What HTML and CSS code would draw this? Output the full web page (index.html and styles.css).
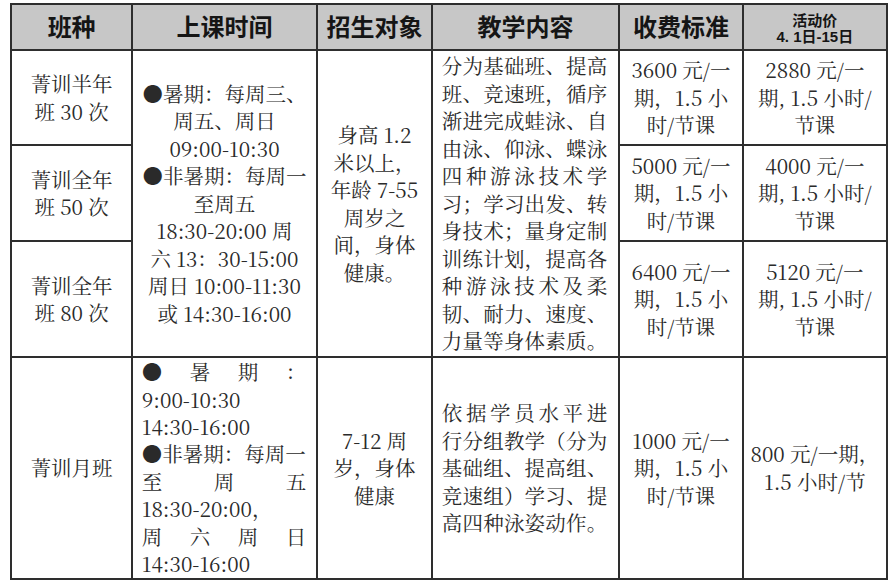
FILE: index.html
```html
<!DOCTYPE html>
<html lang="zh-CN">
<head>
<meta charset="utf-8">
<title>班种收费表</title>
<link rel="stylesheet" href="styles.css">
</head>
<body>
<div class="sheet">
  <div class="cell head">班种</div>
  <div class="cell head">上课时间</div>
  <div class="cell head">招生对象</div>
  <div class="cell head">教学内容</div>
  <div class="cell head">收费标准</div>
  <div class="cell head small"><span>活动价</span><span>4.&nbsp;1日-15日</span></div>

  <div class="cell center">菁训半年<br>班 30 次</div>
  <div class="cell center span3">
    <div class="ln">●暑期：每周三、</div>
    <div class="ln">周五、周日</div>
    <div class="ln">09:00-10:30</div>
    <div class="ln">●非暑期：每周一</div>
    <div class="ln">至周五</div>
    <div class="ln">18:30-20:00 周</div>
    <div class="ln">六 13：30-15:00</div>
    <div class="ln">周日 10:00-11:30</div>
    <div class="ln">或 14:30-16:00</div>
  </div>
  <div class="cell center span3">
    <div class="ln">身高 1.2</div>
    <div class="ln">米以上，</div>
    <div class="ln">年龄 7-55</div>
    <div class="ln">周岁之</div>
    <div class="ln">间，身体</div>
    <div class="ln">健康。</div>
  </div>
  <div class="cell just span3">
    <div class="ln">分为基础班、提高</div>
    <div class="ln">班、竞速班，循序</div>
    <div class="ln">渐进完成蛙泳、自</div>
    <div class="ln">由泳、仰泳、蝶泳</div>
    <div class="ln">四种游泳技术学</div>
    <div class="ln">习；学习出发、转</div>
    <div class="ln">身技术；量身定制</div>
    <div class="ln">训练计划，提高各</div>
    <div class="ln">种游泳技术及柔</div>
    <div class="ln">韧、耐力、速度、</div>
    <div class="ln">力量等身体素质。</div>
  </div>
  <div class="cell center">3600 元/一<br>期，1.5 小<br>时/节课</div>
  <div class="cell center">2880 元/一<br>期, 1.5 小时/<br>节课</div>

  <div class="cell center">菁训全年<br>班 50 次</div>
  <div class="cell center">5000 元/一<br>期，1.5 小<br>时/节课</div>
  <div class="cell center">4000 元/一<br>期, 1.5 小时/<br>节课</div>

  <div class="cell center">菁训全年<br>班 80 次</div>
  <div class="cell center">6400 元/一<br>期，1.5 小<br>时/节课</div>
  <div class="cell center">5120 元/一<br>期, 1.5 小时/<br>节课</div>

  <div class="cell center">菁训月班</div>
  <div class="cell left">
    <div class="ln spread"><span>●</span><span>暑</span><span>期</span><span>：</span></div>
    <div class="ln">9:00-10:30</div>
    <div class="ln">14:30-16:00</div>
    <div class="ln">●非暑期：每周一</div>
    <div class="ln spread"><span>至</span><span>周</span><span>五</span></div>
    <div class="ln">18:30-20:00，</div>
    <div class="ln spread"><span>周</span><span>六</span><span>周</span><span>日</span></div>
    <div class="ln">14:30-16:00</div>
  </div>
  <div class="cell center">7-12 周<br>岁，身体<br>健康</div>
  <div class="cell just">
    <div class="ln">依据学员水平进</div>
    <div class="ln">行分组教学（分为</div>
    <div class="ln">基础组、提高组、</div>
    <div class="ln">竞速组）学习、提</div>
    <div class="ln">高四种泳姿动作。</div>
  </div>
  <div class="cell center">1000 元/一<br>期，1.5 小<br>时/节课</div>
  <div class="cell center">800 元/一期，<br>1.5 小时/节</div>
</div>
</body>
</html>
```

FILE: styles.css
```css
html, body {
  margin: 0;
  padding: 0;
  background: #ffffff;
}

body {
  padding: 3px 0 0 10px;
}

.sheet {
  display: grid;
  grid-template-columns: 119.25px 183.5px 113.5px 185.5px 122.5px 142.25px;
  grid-template-rows: 44.25px 93.5px 94.5px 114.5px 220.25px;
  gap: 1.5px;
  padding: 2px;
  width: max-content;
  background: #2e2e2e;
  font-family: "Noto Serif CJK SC", "Liberation Serif", "Noto Sans CJK SC", serif;
  font-size: 20.5px;
  line-height: 27.5px;
  color: #2a2a2a;
}

.cell {
  background: #ffffff;
  display: flex;
  flex-direction: column;
  justify-content: center;
  min-width: 0;
}

.span3 {
  grid-row: span 3;
}

.head {
  background: #c7c7c7;
  align-items: center;
  font-family: "Liberation Sans", "Noto Sans CJK SC", sans-serif;
  font-weight: 700;
  font-size: 24px;
  line-height: 30px;
  color: #151515;
  padding-top: 2px;
}

.head.small {
  font-size: 15px;
  line-height: 16px;
  padding-top: 4px;
}

.center {
  align-items: center;
  text-align: center;
  padding: 0 6px;
}

.left {
  padding: 0 10px 0 9px;
  line-height: 27.4px;
}

.just {
  padding: 0 11px 0 9px;
}

.ln {
  white-space: nowrap;
}

.just .ln {
  text-align: justify;
  text-align-last: justify;
}

.spread {
  display: flex;
  justify-content: space-between;
}
```
